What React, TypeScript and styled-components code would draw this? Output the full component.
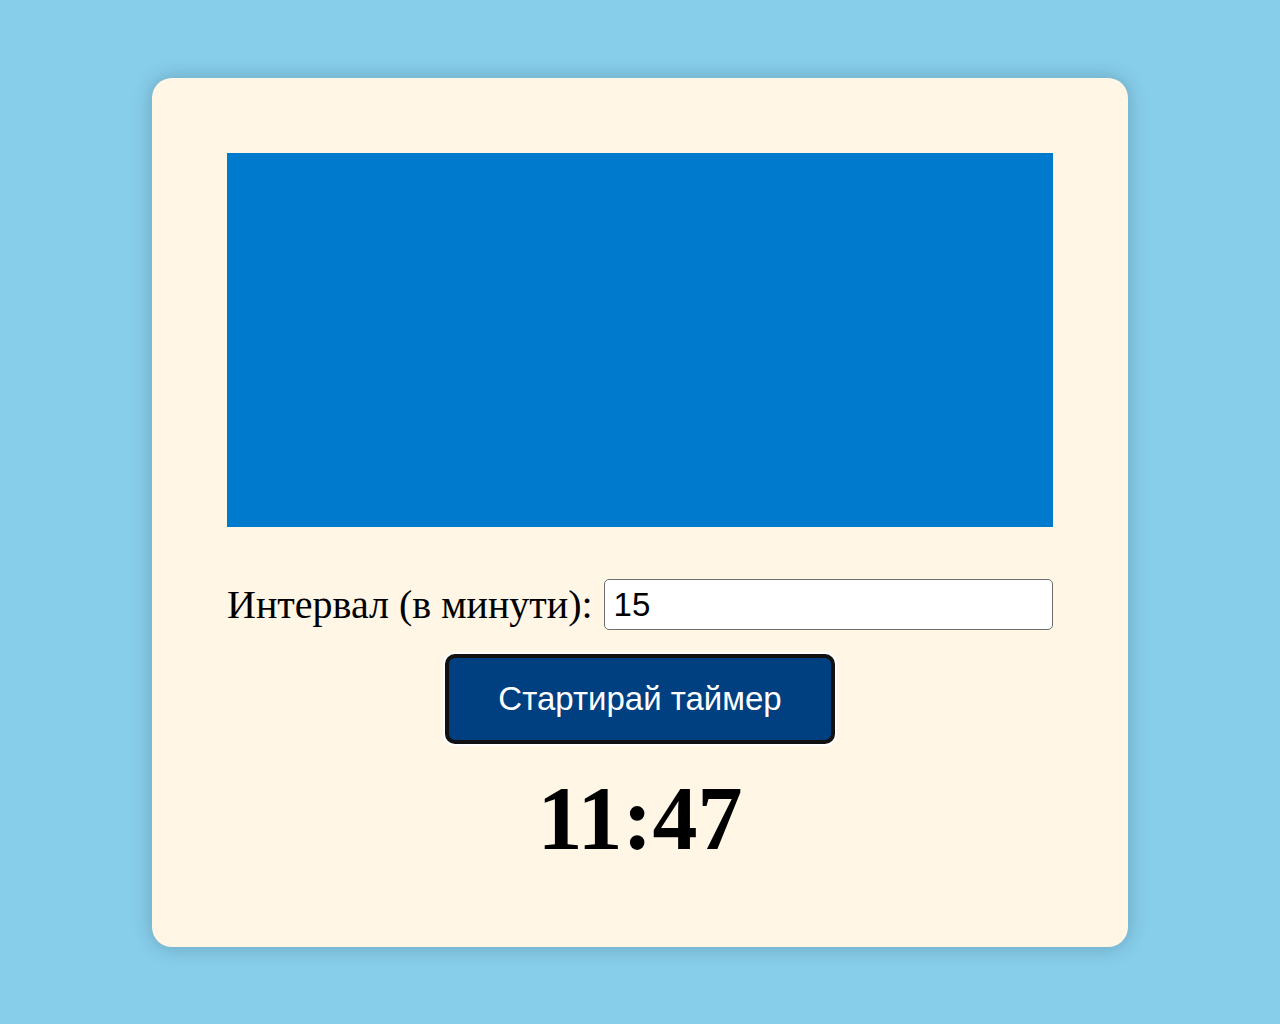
import styled, { createGlobalStyle } from "styled-components"

const GlobalStyle = createGlobalStyle`
    html, body {
        margin: 0;
        padding: 0;
        background: #87ceeb;
        font-family: "Liberation Serif", "Times New Roman", serif;
    }
`

export default function App() {
    return (
        <>
            <GlobalStyle />
            <Page>
                <Card>
                    <Screen />
                    <IntervalRow>
                        <Label htmlFor="interval">Интервал (в минути):</Label>
                        <NumberInput id="interval" type="number" defaultValue={15} />
                    </IntervalRow>
                    <StartButton type="button">Стартирай таймер</StartButton>
                    <Timer>11:47</Timer>
                </Card>
            </Page>
        </>
    )
}

const Page = styled.div`
    min-height: 1024px;
    display: flex;
    justify-content: center;
    align-items: flex-start;
    padding-top: 78px;
    box-sizing: border-box;
`
const Card = styled.div`
    width: 976px;
    box-sizing: border-box;
    padding: 75px 75px 77px;
    background-color: #fff6e6;
    border-radius: 20px;
    box-shadow: 0 0 20px rgba(0, 0, 0, 0.22);
    display: flex;
    flex-direction: column;
`
const Screen = styled.div`
    height: 374px;
    background-color: #007acc;
`
const IntervalRow = styled.div`
    margin-top: 52px;
    display: flex;
    align-items: center;
    gap: 11px;
`
const Label = styled.label`
    font-size: 40px;
    line-height: 1.1;
    color: #000;
    white-space: nowrap;
`
const NumberInput = styled.input`
    flex: 1;
    min-width: 0;
    height: 51px;
    box-sizing: border-box;
    padding: 0 9px;
    border: 1px solid #6f6f6f;
    border-radius: 5px;
    background: #fff;
    font-family: "Liberation Sans", Arial, sans-serif;
    font-size: 33px;
    color: #000;
    appearance: textfield;
    &::-webkit-inner-spin-button,
    &::-webkit-outer-spin-button {
        -webkit-appearance: none;
        margin: 0;
    }
`
const StartButton = styled.button`
    align-self: center;
    margin-top: 24px;
    width: 390px;
    height: 90px;
    border: 4px solid #111;
    border-radius: 10px;
    background-color: #003f80;
    box-shadow: 0 0 0 2px #fff;
    color: #fff;
    font-family: "Liberation Sans", Arial, sans-serif;
    font-size: 33px;
    cursor: pointer;
`
const Timer = styled.div`
    margin-top: 23px;
    text-align: center;
    font-size: 90px;
    font-weight: bold;
    color: #000;
`
